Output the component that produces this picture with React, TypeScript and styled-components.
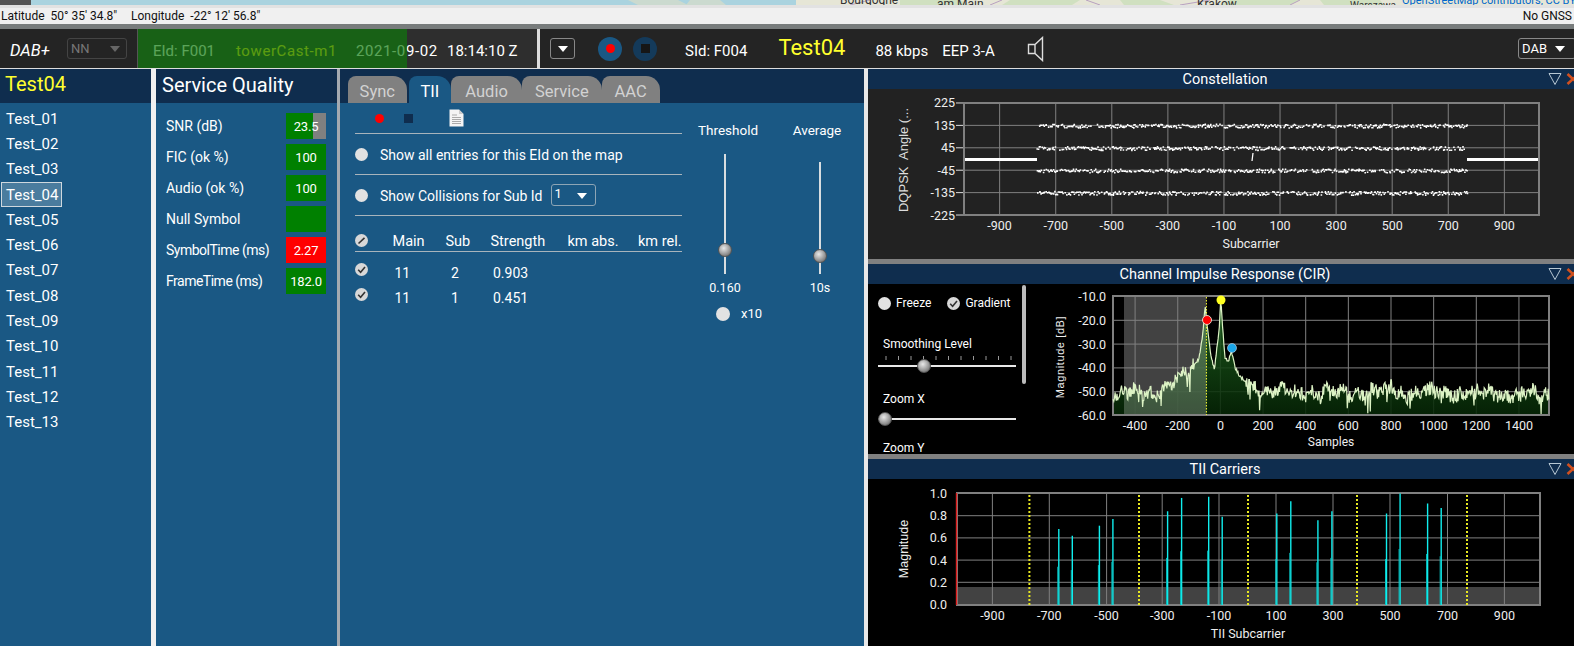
import React from "react";
import styled, { createGlobalStyle } from "styled-components";

const UI = `Roboto, "Open Sans", "Liberation Sans", sans-serif`;
const BLUE = "#1a5884";
const NAVY = "#0f2d4e";

const Global = createGlobalStyle`
  html, body { margin: 0; padding: 0; background: #000; overflow: hidden; }
  #root { width: 1574px; height: 646px; }
  * { box-sizing: border-box; }
`;

const Page = styled.div`
  width: 1574px; height: 646px; overflow: hidden; display: flex; flex-direction: column;
  font-family: ${UI}; color: #fff; background: #000;
`;

/* ---------- top strips ---------- */
const MapStrip = styled.svg`display: block; width: 1574px; height: 5px; flex: none;`;
const StatusBar = styled.div`
  height: 19px; flex: none; background: #f0f0f0; border-top: 3px solid #e2e2e2; color: #111;
  font-size: 12px; display: flex; align-items: center; padding: 0 2px 0 1px;
`;
const StatusText = styled.span<{ $w?: number }>`
  white-space: pre; ${p => (p.$w ? `width: ${p.$w}px;` : "")}
`;
const Spring = styled.div`flex: 1;`;
const GreyBand = styled.div`height: 5px; flex: none; background: #787c7c;`;

/* ---------- transport header ---------- */
const Header = styled.div`
  height: 40px; flex: none; background: #242424; border-bottom: 1px solid #ddd;
  display: flex; align-items: center; position: relative; font-size: 15px;
`;
const Brand = styled.div`font-style: italic; width: 57px; margin-left: 10px; padding-top: 4px; font-size: 16.5px;`;
const Combo = styled.div<{ $w: number; $dim?: boolean }>`
  width: ${p => p.$w}px; height: 21px; border-radius: 3px; flex: none;
  border: 1px solid ${p => (p.$dim ? "#444" : "#888")}; color: ${p => (p.$dim ? "#777" : "#fff")};
  display: flex; align-items: center; justify-content: space-between; font-size: 13px; padding: 0 6px 0 3px;
`;
const SourceCombo = styled(Combo)`justify-content: center; padding: 0; margin-left: 10px;`;
const BandCombo = styled(Combo)`margin-right: -2px; padding-right: 10px;`;
const Caret = styled.span<{ $color?: string }>`
  width: 0; height: 0; border-left: 5px solid transparent; border-right: 5px solid transparent;
  border-top: 6px solid ${p => p.$color || "#fff"}; flex: none;
`;
const Ensemble = styled.div`
  position: relative; margin-left: 10px; width: 400px; height: 39px; background: #2e2e2e;
  border-left: 1px solid #555; display: flex; align-items: center; padding: 4px 0 0 15px; white-space: pre;
`;
const EnsembleText = styled.span<{ $w: number; $c?: string; $ls?: number }>`
  width: ${p => p.$w}px; flex: none; color: ${p => p.$c || "#fff"}; letter-spacing: ${p => p.$ls || 0}px;
`;
const Progress = styled.div`
  position: absolute; left: 0; top: 0; bottom: 0; width: 269px; background: rgba(14,122,11,.684);
`;
const VSep = styled.div`width: 3px; height: 39px; background: #ddd; flex: none;`;
const RoundBtn = styled.div<{ $bg: string; $ml: number }>`
  width: 24px; height: 24px; border-radius: 50%; background: ${p => p.$bg}; flex: none; margin-left: ${p => p.$ml}px;
  display: flex; align-items: center; justify-content: center;
`;
const RecDot = styled.div`width: 9px; height: 9px; border-radius: 50%; background: #f00;`;
const StopSq = styled.div<{ $c: string }>`width: 9px; height: 9px; background: ${p => p.$c};`;
const HeadText = styled.span<{ $ml: number }>`margin-left: ${p => p.$ml}px; flex: none; white-space: pre; padding-top: 5px; font-size: 15px;`;
const HeadName = styled.span`margin-left: 31px; color: #ffff2e; font-size: 22px; flex: none; padding-bottom: 3px;`;
const Speaker = styled.svg`margin-left: 32px; flex: none; display: block;`;

/* ---------- main columns ---------- */
const Main = styled.div`flex: 1; display: flex; min-height: 0; background: #eee;`;
const Column = styled.div<{ $w: number; $gap: number; $gapc: string }>`
  width: ${p => p.$w}px; margin-right: ${p => p.$gap}px; flex: none; background: ${BLUE};
  display: flex; flex-direction: column; position: relative;
  box-shadow: ${p => p.$gap}px 0 0 ${p => p.$gapc};
`;
const ColHead = styled.div`
  height: 34px; background: ${NAVY}; flex: none; display: flex; align-items: center; font-size: 20px;
`;
const ListTitle = styled(ColHead)`color: #ffff2e; padding: 0 0 4px 5px;`;
const QualityTitle = styled(ColHead)`padding: 0 0 2px 6px;`;

const List = styled.div`padding-top: 3px; display: flex; flex-direction: column;`;
const ListItem = styled.div<{ $on?: boolean }>`
  height: 25.3px; width: 61px; margin-left: 1px; padding-left: 4px; font-size: 15px;
  display: flex; align-items: center; white-space: nowrap;
  border: 1px solid ${p => (p.$on ? "#cfd8de" : "transparent")};
  background: ${p => (p.$on ? "#4a7c9e" : "transparent")};
`;

const Quality = styled.div`padding: 10px 11px 0 10px; display: flex; flex-direction: column; gap: 5px;`;
const QualityRow = styled.div`
  display: flex; align-items: center; justify-content: space-between; height: 26px; font-size: 14px;
`;
const QualityLabel = styled.span<{ $tight?: boolean }>`letter-spacing: ${p => (p.$tight ? "-0.5px" : "0")};`;
const Meter = styled.div<{ $bg: string; $fill?: number }>`
  width: 40px; height: 26px; display: flex; align-items: center; justify-content: center; font-size: 13px; letter-spacing: -.2px;
  background: ${p => (p.$fill ? `linear-gradient(90deg, ${p.$bg} ${p.$fill}%, #808080 ${p.$fill}%)` : p.$bg)};
`;

/* ---------- TII tab ---------- */
const TabBar = styled(ColHead)`align-items: flex-end; padding-left: 8px; font-size: 16.5px;`;
const Tab = styled.div<{ $on?: boolean; $w: number }>`
  height: 27px; width: ${p => p.$w}px; padding-top: 3px; margin-left: ${p => (p.$on ? 2 : 0)}px; flex: none;
  border-radius: 8px 14px 0 0; display: flex; align-items: center; justify-content: center;
  background: ${p => (p.$on ? BLUE : "#808080")}; color: ${p => (p.$on ? "#fff" : "#d2d2d2")};
`;
const TabBody = styled.div`flex: 1; display: flex;`;
const TiiLeft = styled.div`width: 327px; margin-left: 15px; flex: none;`;
const Toolbar = styled.div`height: 30px; display: flex; align-items: center;`;
const ToolDot = styled.div`width: 9px; height: 9px; border-radius: 50%; background: #f00; margin-left: 20px;`;
const ToolStop = styled.div`width: 9px; height: 9px; background: ${NAVY}; margin-left: 20px;`;
const DocIcon = styled.svg`width: 15px; height: 18px; margin-left: 36px; display: block;`;
const Rule = styled.div`height: 1px; background: #a8b4bc;`;
const OptionRow = styled.div`height: 40px; display: flex; align-items: center; font-size: 14px;`;
const Radio = styled.div`
  width: 13px; height: 13px; border-radius: 50%; background: #e2e2e2; flex: none;
`;
const OptionText = styled.span`margin-left: 12px; padding-top: 2px; white-space: nowrap;`;
const SubCombo = styled(Combo)`height: 22px; width: 45px; margin-left: 8px; border-color: #8da5b5; padding: 1px 8px 0 3px; align-items: flex-start;`;
const SubCaret = styled(Caret)`margin-top: 7px;`;

const TableHead = styled.div`
  height: 35px; display: grid; grid-template-columns: 37.5px 53px 45px 77px 70.5px 44px; align-items: end;
  font-size: 14.5px; padding-bottom: 1px; white-space: nowrap;
`;
const TableRows = styled.div`padding-top: 8px;`;
const TableRow = styled.div`
  height: 25px; display: grid; grid-template-columns: 39.5px 56.5px 42px 1fr; align-items: center; font-size: 14px;
`;
const CheckIcon = styled.svg`width: 13px; height: 13px; display: block;`;
const RowCheck = styled(CheckIcon)`margin-top: -6px;`;
const HeadCheck = styled(CheckIcon)`margin-bottom: 3px;`;

const SliderCol = styled.div<{ $w: number; $ml: number }>`
  width: ${p => p.$w}px; margin-left: ${p => p.$ml}px; flex: none; padding-top: 18px;
  display: flex; flex-direction: column; align-items: center; font-size: 13.5px;
`;
const SliderLabel = styled.div<{ $dx: number }>`height: 19px; line-height: 19px; margin-left: ${p => p.$dx}px; white-space: nowrap;`;
const SliderWell = styled.div`height: 134px; display: flex; align-items: flex-end;`;
const VTrack = styled.div<{ $h: number }>`
  width: 2px; height: ${p => p.$h}px; background: #d8dde0; position: relative;
`;
const Knob = styled.div`
  width: 14px; height: 14px; border-radius: 50%; border: 1px solid #555;
  background: radial-gradient(circle at 40% 35%, #e8e8e8 0%, #a8a8a8 45%, #585858 100%);
`;
const VKnob = styled(Knob)<{ $bottom: number }>`position: absolute; left: -6px; bottom: ${p => p.$bottom}px;`;
const SliderValue = styled.div`margin-top: 6px; font-size: 12.5px; height: 16px; line-height: 16px;`;
const TimesRow = styled.div`display: flex; align-items: center; margin-top: 10px; font-size: 13px; margin-left: 28px;`;
const TimesRadio = styled(Radio)`width: 14px; height: 14px;`;
const TimesText = styled.span`margin-left: 11px;`;

/* ---------- right-hand chart stack ---------- */
const RightStack = styled.div`flex: 1; min-width: 0; display: flex; flex-direction: column; background: #808080; gap: 5px;`;
const ChartPanel = styled.div<{ $bg: string; $h: number }>`
  height: ${p => p.$h}px; flex: none; background: ${p => p.$bg}; display: flex; flex-direction: column; overflow: hidden;
`;
const ChartHead = styled.div`
  height: 20px; flex: none; background: ${NAVY}; display: flex; align-items: center; justify-content: center;
  font-size: 14.5px; padding-left: 8px; position: relative;
`;
const HeadIcons = styled.svg`position: absolute; right: 0; top: 3px; width: 26px; height: 14px;`;
const ChartBody = styled.div`flex: 1; display: flex; min-height: 0;`;
const Plot = styled.svg`display: block; flex: none;`;
const CirControls = styled.div`
  width: 172px; height: 170px; flex: none; position: relative; overflow: hidden; font-size: 12px; padding: 0 0 0 15px;
`;
const CirTop = styled.div`display: flex; align-items: center; height: 16px; margin-top: 11px; margin-left: -5px;`;
const CirCheck = styled(CheckIcon)`margin-left: 16px;`;
const CirLabel = styled.span`margin-left: 5px;`;
const CirScroll = styled.div`position: absolute; left: 154px; top: 1px; width: 4px; height: 99px; background: #bbb; border-radius: 2px;`;
const CirCaption = styled.div<{ $mt: number }>`margin-top: ${p => p.$mt}px; height: 16px; line-height: 16px; white-space: nowrap;`;
const Ticks = styled.svg`display: block; width: 138px; height: 4px; margin: 4px 0 0 -5px;`;
const HTrack = styled.div<{ $mt: number }>`
  width: 138px; height: 2px; margin: ${p => p.$mt}px 0 0 -5px; background: #e8e8e8; position: relative;
`;
const HKnob = styled(Knob)<{ $left: number }>`position: absolute; top: -6px; left: ${p => p.$left}px;`;

/* ---------- data ---------- */
function rng(seed: number) {
  return () => {
    seed = (seed + 0x6d2b79f5) | 0;
    let t = Math.imul(seed ^ (seed >>> 15), 1 | seed);
    t = (t + Math.imul(t ^ (t >>> 7), 61 | t)) ^ t;
    return ((t ^ (t >>> 14)) >>> 0) / 4294967296;
  };
}

const fine = "#808080";

function Constellation() {
  const X = (s: number) => 1252 + s * 0.2804;
  const Y = (d: number) => 159 - d * 0.249;
  const r = rng(7);
  let dots = "";
  [135, 45, -45, -135].forEach(d => {
    for (let s = -768; s <= 768; s += 3.6) {
      if (r() < 0.2) continue;
      const x = X(s) + (r() - 0.5);
      const y = Y(d) + (r() - 0.5) * 3.6;
      dots += `M${x.toFixed(1)} ${y.toFixed(1)}h1.6v1.6h-1.6z`;
    }
  });
  const xs = [-900, -700, -500, -300, -100, 100, 300, 500, 700, 900];
  const ys = [225, 135, 45, -45, -135, -225];
  return (
    <Plot width={706} height={170} viewBox="868 89 706 170">
      <g stroke={fine} strokeWidth="1">
        {xs.map(v => <line key={v} x1={X(v)} x2={X(v)} y1={103} y2={215} />)}
        {ys.slice(1, 5).map(v => <line key={v} x1={964} x2={1539} y1={Y(v)} y2={Y(v)} />)}
      </g>
      <rect x={964} y={103} width={575} height={112} fill="none" stroke={fine} strokeWidth="2" />
      <g stroke="#ddd" strokeWidth="1">
        {ys.map(v => <line key={v} x1={956} x2={963} y1={Y(v)} y2={Y(v)} />)}
      </g>
      <path d={dots} fill="#fff" />
      <rect x={965} y={158} width={72} height={3} fill="#fff" />
      <rect x={1467} y={158} width={71} height={3} fill="#fff" />
      <path d="M1253 153l-1 8" stroke="#fff" strokeWidth="1.3" />
      <g fill="#eee" fontFamily={UI} fontSize="12.5">
        {ys.map(v => <text key={v} x={955} y={Y(v) + 4.5} textAnchor="end">{v}</text>)}
        {xs.map(v => <text key={v} x={X(v)} y={230} textAnchor="middle">{v}</text>)}
        <text x={1251} y={248} textAnchor="middle">Subcarrier</text>
      </g>
      <text transform="translate(908 160) rotate(-90)" fill="#ddd" fontFamily="'Liberation Sans', sans-serif" fontSize="13" textAnchor="middle" xmlSpace="preserve">DQPSK  Angle (...</text>
    </Plot>
  );
}

function cirEnvelope(s: number) {
  const seg: [number, number][] = [
    [-510, -51], [-300, -50], [-200, -45], [-130, -40], [-100, -36], [-85, -28], [-72, -14], [-60, -24],
    [-45, -34], [-28, -41], [-16, -31], [-6, -24], [2, -11.5], [10, -22], [22, -36], [38, -37], [52, -33], [70, -40],
    [95, -44], [125, -46], [200, -50], [1545, -51],
  ];
  for (let i = 1; i < seg.length; i++) {
    if (s <= seg[i][0]) {
      const [a, av] = seg[i - 1];
      const [b, bv] = seg[i];
      return av + ((s - a) / (b - a)) * (bv - av);
    }
  }
  return -51;
}

function Cir() {
  const X = (s: number) => 1220.4 + s * 0.21325;
  const Y = (d: number) => 296.5 + (-10 - d) * 2.38;
  const r = rng(21);
  const pts: string[] = [];
  for (let s = -503; s <= 1541; s += 3) {
    const near = Math.abs(s) < 120;
    const wobble = Math.sin(s / 37) * 1.1 + Math.sin(s / 11) * 0.9;
    let d = cirEnvelope(s) + (near ? (r() - 0.5) * 1.5 : wobble + (r() - 0.5) * 6);
    if (!near && r() < 0.08) d -= r() * 8;
    if (Math.abs(s - 800) < 4) d = -45;
    pts.push(`${X(s).toFixed(1)} ${Math.min(Y(d), 414).toFixed(1)}`);
  }
  const line = "M" + pts.join("L");
  const fill = `${line}L1549 415L1113 415Z`;
  const xs = [-400, -200, 0, 200, 400, 600, 800, 1000, 1200, 1400];
  const ys = [-10, -20, -30, -40, -50, -60];
  return (
    <Plot width={534} height={170} viewBox="1040 284 534 170">
      <defs>
        <linearGradient id="cirFill" x1="0" x2="0" y1="296" y2="415" gradientUnits="userSpaceOnUse">
          <stop offset="0" stopColor="#226a22" />
          <stop offset="1" stopColor="#062606" />
        </linearGradient>
        <clipPath id="cirNoise">
          <rect x={1124} y={296} width={82.5} height={119} />
        </clipPath>
      </defs>
      <rect x={1124} y={296} width={82.5} height={119} fill="#424242" />
      <g stroke={fine} strokeWidth="1">
        {xs.map(v => <line key={v} x1={X(v)} x2={X(v)} y1={296} y2={415} />)}
        {ys.slice(1, 5).map(v => <line key={v} x1={1113} x2={1549} y1={Y(v)} y2={Y(v)} />)}
      </g>
      <path d={fill} fill="url(#cirFill)" fillOpacity=".88" />
      <path d={fill} fill="#fff" fillOpacity=".2" clipPath="url(#cirNoise)" />
      <rect x={1113} y={296} width={436} height={119} fill="none" stroke={fine} strokeWidth="2" />
      <path d={line} fill="none" stroke="#dcf2c4" strokeWidth="1.2" />
      <line x1={1206.4} x2={1206.4} y1={297} y2={415} stroke="#ffff30" strokeDasharray="1.5 1.5" />
      <circle cx={1207} cy={320} r={4.5} fill="#f00" stroke="#e4d0c0" />
      <circle cx={1221} cy={300} r={4.5} fill="#ffff20" />
      <circle cx={1232} cy={348} r={4.5} fill="#1aa6e8" stroke="#cde" strokeWidth=".6" />
      <g fill="#eee" fontFamily={UI} fontSize="12.5">
        {ys.map(v => <text key={v} x={1106} y={Y(v) + 4.5} textAnchor="end">{v.toFixed(1)}</text>)}
        {xs.map(v => <text key={v} x={X(v)} y={430} textAnchor="middle">{v}</text>)}
        <text x={1331} y={446} textAnchor="middle" fontSize="12">Samples</text>
      </g>
      <text transform="translate(1064 357) rotate(-90)" fill="#eee" fontFamily="'Liberation Sans', sans-serif" fontSize="11" letterSpacing=".6" textAnchor="middle">Magnitude [dB]</text>
    </Plot>
  );
}

const tiiBars: [number, number][] = [
  [1058.8, .68], [1072.3, .62], [1099.4, .71], [1112.9, .77], [1167.6, .84], [1181.6, .96], [1208.7, .97], [1222.2, .79],
  [1276.8, .82], [1290.8, .93], [1317.9, .76], [1331.9, .84], [1386.5, .82], [1400.1, 1], [1427.6, .91], [1441.2, .87],
];

function TiiCarriers() {
  const Y = (m: number) => 604.5 - m * 111;
  const xs = [
    [-900, 992.4], [-700, 1049.3], [-500, 1106.6], [-300, 1162.2], [-100, 1219], [100, 1276], [300, 1333], [500, 1390], [700, 1447.5], [900, 1504.4],
  ];
  const ys = [1, .8, .6, .4, .2, 0];
  return (
    <Plot width={706} height={167} viewBox="868 479 706 167">
      <rect x={957} y={587} width={582} height={18} fill="#424242" />
      <g stroke={fine} strokeWidth="1">
        {xs.map(([v, x]) => <line key={v} x1={x} x2={x} y1={493} y2={605} />)}
        {ys.slice(1, 5).map(v => <line key={v} x1={957} x2={1539} y1={Y(v)} y2={Y(v)} />)}
      </g>
      <rect x={957} y={493} width={583} height={112} fill="none" stroke={fine} strokeWidth="2" />
      <line x1={956.5} x2={956.5} y1={493} y2={605} stroke="#e02020" strokeWidth="1.4" />
      <g stroke="#e8e820" strokeWidth="2" strokeDasharray="2 2">
        {[1029.4, 1139, 1248, 1357, 1467].map(x => <line key={x} x1={x} x2={x} y1={495} y2={605} />)}
      </g>
      <g>
        {tiiBars.map(([x, m]) => (
          <g key={x}>
            <line x1={x} x2={x} y1={Y(m)} y2={605} stroke="#10eeee" strokeWidth="1.4" />
            <line x1={x - 1} x2={x - 1} y1={Y(m * 0.5)} y2={605} stroke="#0ac4c4" strokeWidth="1" />
          </g>
        ))}
      </g>
      <g fill="#eee" fontFamily={UI} fontSize="12.5">
        {ys.map(v => <text key={v} x={947} y={Y(v) + 4.5} textAnchor="end">{v.toFixed(1)}</text>)}
        {xs.map(([v, x]) => <text key={v} x={x} y={620} textAnchor="middle">{v}</text>)}
        <text x={1248} y={638} textAnchor="middle">TII Subcarrier</text>
      </g>
      <text transform="translate(908 549) rotate(-90)" fill="#eee" fontFamily="'Liberation Sans', sans-serif" fontSize="12.5" textAnchor="middle">Magnitude</text>
    </Plot>
  );
}

const Tick = ({ slash }: { slash?: boolean }) => (
  <>
    <circle cx="6.5" cy="6.5" r="6.5" fill="#d8d8d8" />
    {slash ? (
      <path d="M3.5 9.5L9.5 3.8" stroke="#333" strokeWidth="1.6" fill="none" />
    ) : (
      <path d="M3.2 6.8L5.6 9.2L10 4" stroke="#333" strokeWidth="1.6" fill="none" />
    )}
  </>
);

const ChartIcons = () => (
  <HeadIcons viewBox="0 0 26 14">
    <path d="M1 1.5H13L7 12.5Z" fill="none" stroke="#b8c8d4" strokeWidth="1" />
    <path d="M19.5 2L25 7L19.5 12" fill="none" stroke="#d2501e" strokeWidth="2.6" />
    <path d="M31 2L25 7L31 12" fill="none" stroke="#d2501e" strokeWidth="2.6" />
  </HeadIcons>
);

const stations = Array.from({ length: 13 }, (_, i) => `Test_${String(i + 1).padStart(2, "0")}`);
const quality = [
  { label: "SNR (dB)", value: "23.5", bg: "#008000", fill: 67 },
  { label: "FIC (ok %)", value: "100", bg: "#008000" },
  { label: "Audio (ok %)", value: "100", bg: "#008000" },
  { label: "Null Symbol", value: "", bg: "#008000" },
  { label: "SymbolTime (ms)", value: "2.27", bg: "#ff0000", tight: true },
  { label: "FrameTime (ms)", value: "182.0", bg: "#008000", tight: true },
];
const tabs = [
  { name: "Sync", w: 58.6 },
  { name: "TII", w: 42.5, on: true },
  { name: "Audio", w: 71 },
  { name: "Service", w: 79.5 },
  { name: "AAC", w: 58 },
];

export default function App() {
  return (
    <Page>
      <Global />
      <MapStrip viewBox="0 0 1574 5">
        <rect width="1574" height="5" fill="#aad3df" />
        <rect width="31" height="5" fill="#555" />
        <path d="M628 0h50l10 5h-50zM690 0h30l6 5h-40z" fill="#d8ddc8" opacity=".7" />
        <rect x="796" width="778" height="5" fill="#e6e6d6" />
        <path d="M900 0h60l10 5h-70zM1010 0h70l-8 5h-70zM1120 0h40l14 5h-50zM1230 0h70l-10 5h-70zM1320 0h60l4 5h-60z" fill="#d0e0c0" />
        <path d="M850 5l20-5M990 5l12-5M1100 5l-14-5M1180 5l30-5M1290 5l10-5" stroke="#b8a0c0" fill="none" />
        <g fontFamily={UI} fontSize="12" fill="#333">
          <text x="840" y="4">Bourgogne</text>
          <text x="937" y="8">am Main</text>
          <text x="1197" y="8">Kraków</text>
          <text x="1350" y="9" fontSize="10">Warszawa</text>
        </g>
        <text x="1402" y="4" fontFamily={UI} fontSize="11" fill="#06c">OpenStreetMap contributors, CC BY-SA</text>
      </MapStrip>
      <StatusBar>
        <StatusText $w={130}>Latitude  50° 35' 34.8"</StatusText>
        <StatusText>Longitude  -22° 12' 56.8"</StatusText>
        <Spring />
        <StatusText>No GNSS</StatusText>
      </StatusBar>
      <GreyBand />
      <Header>
        <Brand>DAB+</Brand>
        <Combo $w={60} $dim>NN<Caret $color="#666" /></Combo>
        <Ensemble>
          <EnsembleText $w={83}>EId: F001</EnsembleText>
          <EnsembleText $w={120} $c="#ffe71b" $ls={0.6}>towerCast-m1</EnsembleText>
          <EnsembleText $w={91} $ls={0.6}>2021-09-02</EnsembleText>
          <EnsembleText $w={80}>18:14:10 Z</EnsembleText>
          <Progress />
        </Ensemble>
        <VSep />
        <SourceCombo $w={25}><Caret /></SourceCombo>
        <RoundBtn $bg={BLUE} $ml={23}><RecDot /></RoundBtn>
        <RoundBtn $bg="#143a5a" $ml={11}><StopSq $c="#161616" /></RoundBtn>
        <HeadText $ml={28}>SId: F004</HeadText>
        <HeadName>Test04</HeadName>
        <HeadText $ml={30}>88 kbps</HeadText>
        <HeadText $ml={14}>EEP 3-A</HeadText>
        <Speaker width="20" height="26" viewBox="0 0 20 26">
          <path d="M1.5 8.5H8L15.5 1.5V24.5L8 17.5H1.5Z M8 8.5V17.5" fill="none" stroke="#ddd" strokeWidth="1.4" />
        </Speaker>
        <Spring />
        <BandCombo $w={58}>DAB<Caret /></BandCombo>
      </Header>
      <Main>
        <Column $w={151} $gap={5} $gapc="#f0f0f0">
          <ListTitle>Test04</ListTitle>
          <List>
            {stations.map(s => <ListItem key={s} $on={s === "Test_04"}>{s}</ListItem>)}
          </List>
        </Column>
        <Column $w={181} $gap={3} $gapc="#a4aab0">
          <QualityTitle>Service Quality</QualityTitle>
          <Quality>
            {quality.map(q => (
              <QualityRow key={q.label}>
                <QualityLabel $tight={q.tight}>{q.label}</QualityLabel>
                <Meter $bg={q.bg} $fill={q.fill}>{q.value}</Meter>
              </QualityRow>
            ))}
          </Quality>
        </Column>
        <Column $w={524} $gap={4} $gapc="#e8e8e8">
          <TabBar>
            {tabs.map(t => <Tab key={t.name} $w={t.w} $on={t.on}>{t.name}</Tab>)}
          </TabBar>
          <TabBody>
            <TiiLeft>
              <Toolbar>
                <ToolDot /><ToolStop />
                <DocIcon viewBox="0 0 15 18">
                  <path d="M.5.5H10L14.5 5V17.5H.5Z" fill="#f4f4f4" />
                  <path d="M10 .5V5H14.5" fill="#ccc" />
                  <path d="M3 6h5M3 8.5h9M3 10.5h9M3 12.5h9M3 14.5h9" stroke="#aaa" strokeWidth="1" />
                </DocIcon>
              </Toolbar>
              <Rule />
              <OptionRow><Radio /><OptionText>Show all entries for this EId on the map</OptionText></OptionRow>
              <Rule />
              <OptionRow>
                <Radio /><OptionText>Show Collisions for Sub Id</OptionText>
                <SubCombo $w={45}>1<SubCaret /></SubCombo>
              </OptionRow>
              <Rule />
              <TableHead>
                <HeadCheck viewBox="0 0 13 13"><Tick slash /></HeadCheck>
                <span>Main</span><span>Sub</span><span>Strength</span><span>km abs.</span><span>km rel.</span>
              </TableHead>
              <Rule />
              <TableRows>
                <TableRow><RowCheck viewBox="0 0 13 13"><Tick /></RowCheck><span>11</span><span>2</span><span>0.903</span></TableRow>
                <TableRow><RowCheck viewBox="0 0 13 13"><Tick /></RowCheck><span>11</span><span>1</span><span>0.451</span></TableRow>
              </TableRows>
            </TiiLeft>
            <SliderCol $w={90} $ml={-2}>
              <SliderLabel $dx={6}>Threshold</SliderLabel>
              <SliderWell><VTrack $h={120}><VKnob $bottom={17} /></VTrack></SliderWell>
              <SliderValue>0.160</SliderValue>
              <TimesRow><TimesRadio /><TimesText>x10</TimesText></TimesRow>
            </SliderCol>
            <SliderCol $w={84} $ml={8}>
              <SliderLabel $dx={-6}>Average</SliderLabel>
              <SliderWell><VTrack $h={112}><VKnob $bottom={11} /></VTrack></SliderWell>
              <SliderValue>10s</SliderValue>
            </SliderCol>
          </TabBody>
        </Column>
        <RightStack>
          <ChartPanel $bg="#222" $h={190}>
            <ChartHead>Constellation<ChartIcons /></ChartHead>
            <ChartBody><Constellation /></ChartBody>
          </ChartPanel>
          <ChartPanel $bg="#000" $h={190}>
            <ChartHead>Channel Impulse Response (CIR)<ChartIcons /></ChartHead>
            <ChartBody>
              <CirControls>
                <CirTop>
                  <Radio />
                  <CirLabel>Freeze</CirLabel>
                  <CirCheck viewBox="0 0 13 13"><Tick /></CirCheck>
                  <CirLabel>Gradient</CirLabel>
                </CirTop>
                <CirScroll />
                <CirCaption $mt={25}>Smoothing Level</CirCaption>
                <Ticks viewBox="0 0 138 4">
                  {Array.from({ length: 11 }, (_, i) => <line key={i} x1={8 + i * 12.5} x2={8 + i * 12.5} y1="0" y2="4" stroke="#999" />)}
                </Ticks>
                <HTrack $mt={5}><HKnob $left={39} /></HTrack>
                <CirCaption $mt={24}>Zoom X</CirCaption>
                <HTrack $mt={11}><HKnob $left={0} /></HTrack>
                <CirCaption $mt={20}>Zoom Y</CirCaption>
              </CirControls>
              <Cir />
            </ChartBody>
          </ChartPanel>
          <ChartPanel $bg="#000" $h={187}>
            <ChartHead>TII Carriers<ChartIcons /></ChartHead>
            <ChartBody><TiiCarriers /></ChartBody>
          </ChartPanel>
        </RightStack>
      </Main>
    </Page>
  );
}
